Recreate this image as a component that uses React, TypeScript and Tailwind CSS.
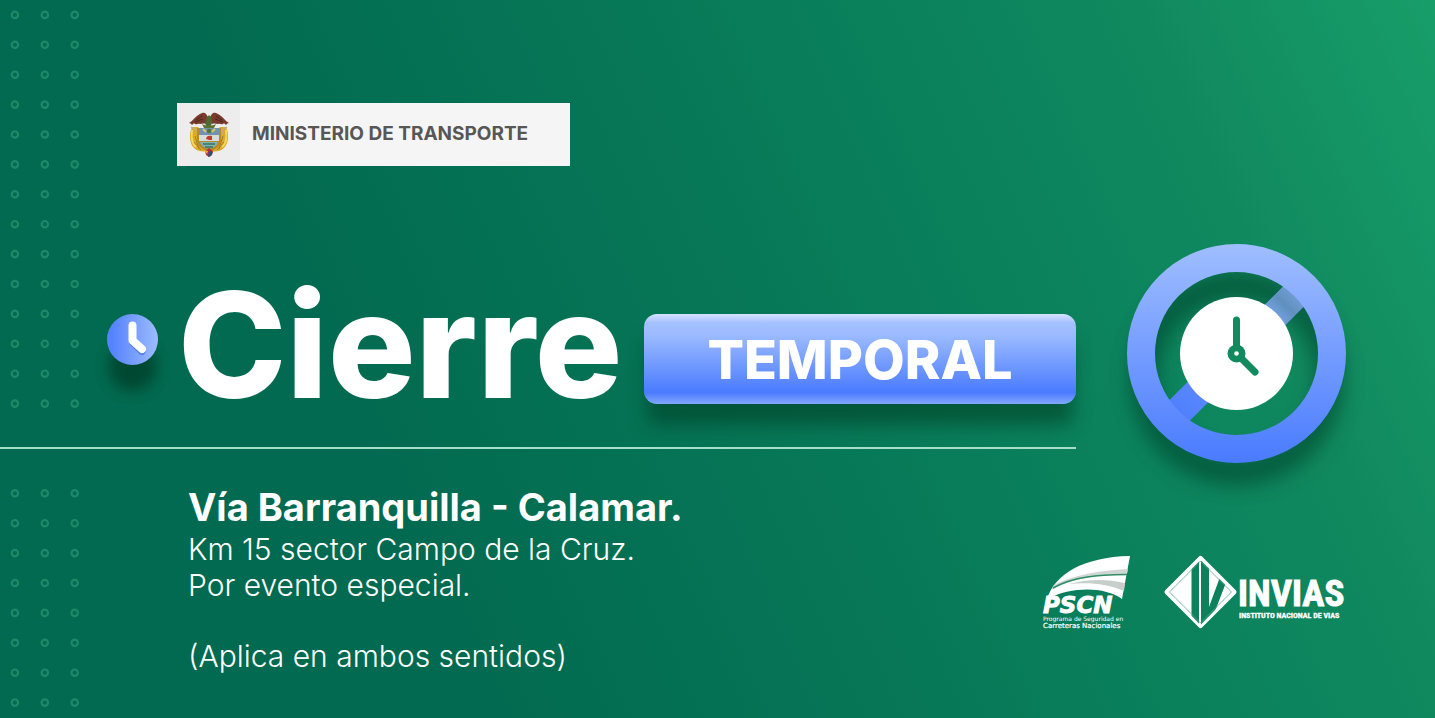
import React from "react";

const dotRows = Array.from({ length: 24 }, (_, i) => i).filter((i) => i !== 14 && i !== 15);

function DotPattern() {
  return (
    <svg className="pointer-events-none absolute top-0 left-0" width="90" height="718" aria-hidden="true">
      {dotRows.map((row) =>
        [0, 1, 2].map((col) => (
          <circle
            key={`${row}-${col}`}
            cx={14.9 + col * 29.9}
            cy={14.9 + row * 29.9}
            r="3.2"
            fill="none"
            stroke="#1c8a69"
            strokeWidth="2.2"
          />
        )),
      )}
    </svg>
  );
}

function CoatOfArms() {
  return (
    <svg width="42" height="46" viewBox="0 0 42 46" role="img" aria-label="Escudo de Colombia">
      <path d="M4 15C1 21 1 31 6 36c4 4 10 4 15 3 5 1 11 1 15-3 5-5 5-15 2-21l-6 0-10 12-12-12z" fill="#d9ab2b" />
      <path d="M4 18c-1 8 0 14 4 17M38 18c1 8 0 14-4 17" fill="none" stroke="#f3d65b" strokeWidth="2" />
      <path d="M7 24l4 13M35 24l-4 13M6 30l7 8M36 30l-7 8" stroke="#a87c22" strokeWidth="1" />
      <path d="M3 15l5 3-1 4M39 15l-5 3 1 4" fill="none" stroke="#c3a88f" strokeWidth="1.4" />
      <path d="M1 11C5 9 8 3 14 1c3-1 5 1 6 5l-2 6c-3-1-4 0-6 0-2-1-3 1-5 0-1-1-2 0-3 1-1-1 0-1-3-2z" fill="#7a3b2d" />
      <path d="M41 11C37 9 34 3 28 1c-3-1-5 1-6 5l2 6c3-1 4 0 6 0 2-1 3 1 5 0 1-1 2 0 3 1 1-1 0-1 3-2z" fill="#7a3b2d" />
      <path d="M8 8l6-4M7 10l8-3M34 8l-6-4M35 10l-8-3" stroke="#4a271f" strokeWidth="1" />
      <path d="M19 5c1-2 3-2 4 0l1 6-2 5h-3l-2-5z" fill="#4d6a33" />
      <path d="M14 12c4 2 10 2 14 0l-2 4H16z" fill="#5d7434" />
      <path d="M9 16h24l0 12c0 6-5 9-12 12C14 37 9 34 9 28z" fill="#b98a22" />
      <path d="M11 16h20v7H11z" fill="#6f93b5" />
      <path d="M15 17l3 3M27 17l-3 3" stroke="#dfc55b" strokeWidth="2" />
      <circle cx="21" cy="19" r="2.2" fill="#52743c" />
      <path d="M11 23h20v6H11z" fill="#d5dcdb" />
      <path d="M18 27c0-3 3-4 6-3v4h-3z" fill="#c63832" />
      <path d="M12 30h18c-1 4-5 6-9 7-4-1-8-3-9-7z" fill="#7fb0c0" />
      <path d="M15 32h12M17 35h8" stroke="#3e7650" strokeWidth="1.5" />
      <path d="M17 39l4-3 4 3-1 4-3 2-3-2z" fill="#b62f31" />
      <path d="M21 39l4 1-2 4-3 1z" fill="#354c79" />
      <path d="M16 38l4 1-1 3z" fill="#e2b735" />
    </svg>
  );
}

function SmallClock() {
  return (
    <svg className="shrink-0 overflow-visible" width="51" height="51" viewBox="0 0 51 51" aria-hidden="true">
      <defs>
        <linearGradient id="small-face" x1="0" x2="1" y1="0" y2="0">
          <stop offset="0.1" stopColor="#5583ff" />
          <stop offset="1" stopColor="#9dbcff" />
        </linearGradient>
        <filter id="small-shadow" x="-60%" y="-60%" width="220%" height="220%">
          <feGaussianBlur stdDeviation="7" />
        </filter>
      </defs>
      <circle cx="25.5" cy="53" r="24" fill="#003f2c" opacity="0.8" filter="url(#small-shadow)" />
      <circle cx="25.5" cy="25.5" r="25.5" fill="url(#small-face)" />
      <path d="M25.5 13v15l9.5 9.5" fill="none" stroke="#3562cf" strokeWidth="7" strokeLinecap="round" strokeLinejoin="round" opacity="0.6" />
      <path d="M25.5 11.5v15L35 35" fill="none" stroke="#fff" strokeWidth="8" strokeLinecap="round" strokeLinejoin="round" />
    </svg>
  );
}

function BigClock() {
  return (
    <svg className="shrink-0 overflow-visible" width="219" height="219" viewBox="0 0 219 219" role="img" aria-label="Cierre temporal">
      <defs>
        <linearGradient id="ring" x1="0" x2="0" y1="0" y2="219" gradientUnits="userSpaceOnUse">
          <stop offset="0" stopColor="#9fbeff" />
          <stop offset="1" stopColor="#4a7bff" />
        </linearGradient>
        <linearGradient id="bar" x1="38" x2="181" y1="181" y2="38" gradientUnits="userSpaceOnUse">
          <stop offset="0" stopColor="#4a7bff" />
          <stop offset="0.25" stopColor="#5a87fd" />
          <stop offset="0.75" stopColor="#79a3ea" />
          <stop offset="0.84" stopColor="#5f90bd" />
          <stop offset="0.95" stopColor="#7ba4e0" />
        </linearGradient>
        <filter id="ring-shadow" x="-30%" y="-30%" width="160%" height="160%">
          <feGaussianBlur stdDeviation="10" />
        </filter>
      </defs>
      <circle cx="109.5" cy="134" r="93" fill="none" stroke="#04472d" strokeWidth="28" opacity="0.66" filter="url(#ring-shadow)" />
      <path d="M51 168L168 51" stroke="url(#bar)" strokeWidth="29" />
      <circle cx="109.5" cy="109.5" r="95.5" fill="none" stroke="url(#ring)" strokeWidth="28" />
      <circle cx="109.5" cy="109.5" r="56.5" fill="#fff" />
      <path d="M109.5 109.5V76M109.5 109.5l18.5 18.5" stroke="#118a5f" strokeWidth="7" strokeLinecap="round" />
      <circle cx="109.5" cy="109.5" r="9" fill="#118a5f" />
      <circle cx="109.5" cy="109.5" r="2.3" fill="#fff" />
    </svg>
  );
}

function PscnLogo() {
  return (
    <svg className="overflow-visible" width="88" height="75" viewBox="0 0 88 75" role="img" aria-label="PSCN">
      <path d="M4 44C12 19 40 2 87 1L79 44C62 32 30 31 4 44z" fill="#fff" />
      <path d="M11 30C32 19 56 16 85 14l-1 5C56 20 32 22 8 35z" fill="#cfd5d2" />
      <path d="M10 33C31 21 56 20 84 19.500" fill="none" stroke="#2f8d66" strokeWidth="1.5" />
      <path d="M26 29c19-5 37-5 56-1l-1 8c-16-7-34-9-55-7z" fill="#c8cfcb" />
      <text x="0" y="58" fill="#fff" stroke="#fff" strokeWidth="0.9" fontFamily="DejaVu Sans, sans-serif" fontSize="23" fontStyle="italic" fontWeight="700">PSCN</text>
      <text x="0" y="66" fill="#fff" fontFamily="DejaVu Sans, sans-serif" fontSize="6">Programa de Seguridad en</text>
      <text x="0" y="73" fill="#fff" stroke="#fff" strokeWidth="0.2" fontFamily="DejaVu Sans, sans-serif" fontSize="7">Carreteras Nacionales</text>
    </svg>
  );
}

function InviasLogo() {
  return (
    <svg className="overflow-visible" width="183" height="75" viewBox="0 0 183 75" role="img" aria-label="INVIAS, Instituto Nacional de Vías">
      <defs>
        <clipPath id="diamond">
          <path d="M37.5 5L69.5 37 37.5 70 5.5 37z" />
        </clipPath>
      </defs>
      <path d="M37.5 3.5L71 37 37.5 70.5 4 37z" fill="#fff" stroke="#fff" strokeWidth="5" strokeLinejoin="round" />
      <g clipPath="url(#diamond)" fill="#0d815a">
        <path d="M28.5 0h7.500v75h-7.500z" />
        <path d="M38 0h8v52L57 22l7 3L49 64l-3 11h-8z" />
      </g>
      <path d="M37.5 6L68.500 37 37.500 68 6.500 37z" fill="none" stroke="#5aaa89" strokeWidth="0.8" />
      <text x="75" y="51" fill="#fff" stroke="#fff" strokeWidth="0.9" fontFamily="Liberation Sans Narrow, Roboto Condensed, sans-serif" fontSize="37" fontWeight="700">INVIAS</text>
      <text x="76" y="63" fill="#fff" stroke="#fff" strokeWidth="0.3" fontFamily="Liberation Sans Narrow, Roboto Condensed, sans-serif" fontSize="8" fontWeight="700">INSTITUTO NACIONAL DE VIAS</text>
    </svg>
  );
}

export default function App() {
  return (
    <main className="relative flex min-h-screen flex-col overflow-hidden bg-[linear-gradient(66deg,#026a50_0%,#026a50_28%,#067556_49%,#0c845d_74%,#11895f_83%,#179e69_100%)] font-['Inter','Liberation_Sans',sans-serif] text-white">
      <DotPattern />

      <header className="relative pt-[103px] pl-[177px]">
        <div className="flex h-[63px] w-[393px] items-center bg-[#f5f5f5]">
          <div className="flex h-full w-[63px] items-center justify-center bg-[#ededed]">
            <CoatOfArms />
          </div>
          <p className="pl-3 text-[19px] font-bold whitespace-nowrap text-[#575756]">MINISTERIO DE TRANSPORTE</p>
        </div>
      </header>

      <section className="relative mt-[78px] flex h-[204px] items-start pr-[89px] pl-[107px]">
        <div className="flex pt-[70px]">
          <SmallClock />
        </div>
        <h1 className="flex flex-1 items-start">
          <span className="pt-[20px] pl-[20px] text-[146px] leading-[162px] font-extrabold">Cierre</span>
          <span className="mt-[70px] mr-[51px] ml-auto flex h-[90px] w-[432px] shrink-0 items-center justify-center rounded-[13px] bg-[linear-gradient(180deg,#d5e2ff_0%,#a3c0ff_10%,#9dbcff_22%,#4a7bff_87%,#83a7ff_100%)] text-[54px] font-extrabold shadow-[0_24px_18px_-3px_rgba(0,65,38,0.6)]">
            TEMPORAL
          </span>
        </h1>
        <BigClock />
      </section>

      <hr className="relative -mt-px h-[2px] w-3/4 border-0 bg-[#a5dfc9]" />

      <section className="relative flex flex-1 items-start justify-between pr-[89px] pl-[188px]">
        <div className="pt-[36px]">
          <h2 className="text-[38px] leading-[44px] font-bold">Vía Barranquilla - Calamar.</h2>
          <p className="mt-[2px] text-[30px] leading-[36px] font-light">Km 15 sector Campo de la Cruz.</p>
          <p className="text-[30px] leading-[36px] font-light">Por evento especial.</p>
          <p className="mt-[35px] text-[30px] leading-[36px] font-light">(Aplica en ambos sentidos)</p>
        </div>
        <div className="flex gap-8 pt-[106px]">
          <PscnLogo />
          <InviasLogo />
        </div>
      </section>
    </main>
  );
}
